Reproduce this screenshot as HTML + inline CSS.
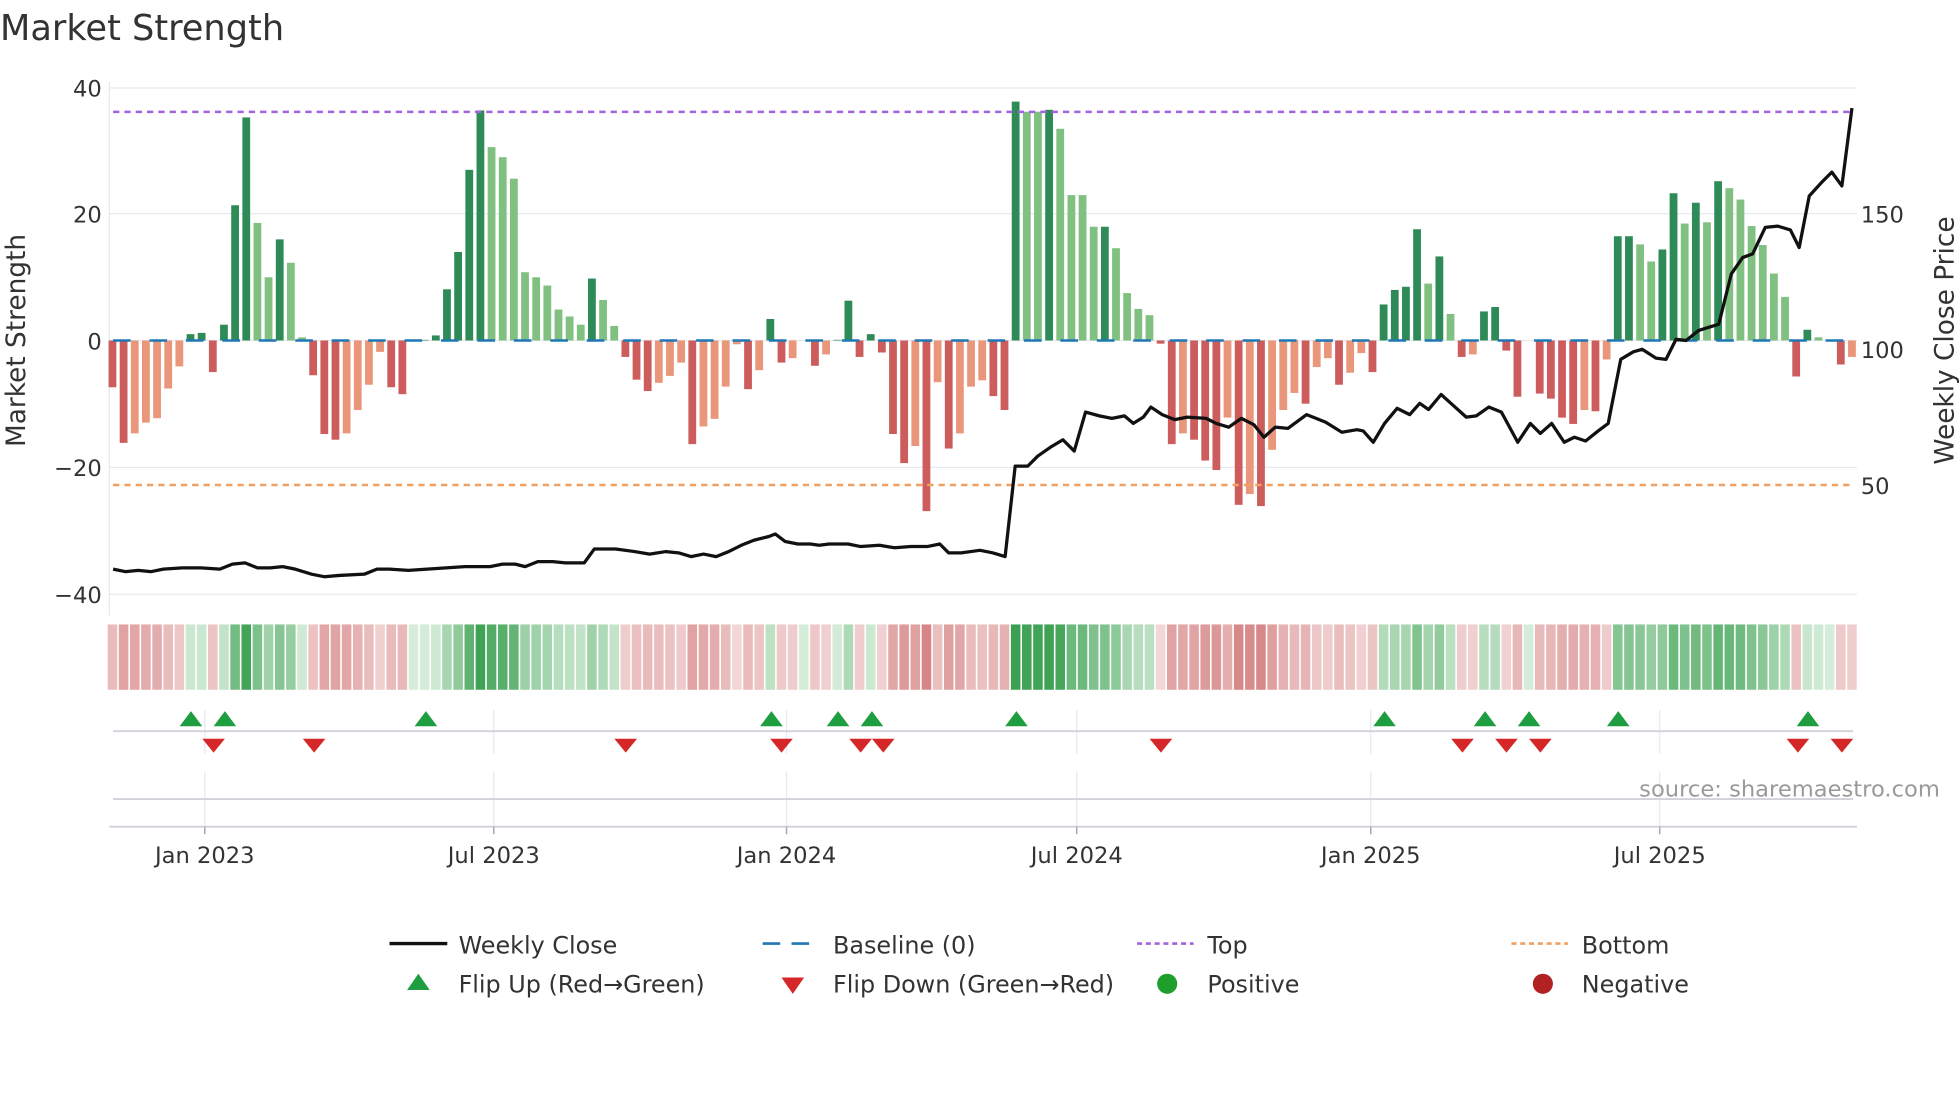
<!DOCTYPE html>
<html><head><meta charset="utf-8"><style>
html,body{margin:0;padding:0;background:#fff;width:1960px;height:1102px;overflow:hidden}
svg{display:block}
text{font-family:"DejaVu Sans","Liberation Sans",sans-serif;fill:#333}
</style></head><body>
<svg id="s" xmlns="http://www.w3.org/2000/svg" width="1960" height="1102" viewBox="0 0 1560 877.1" preserveAspectRatio="none">
<rect width="1560" height="878" fill="#fff"/>
<text x="0" y="32" font-size="28">Market Strength</text>
<g stroke="#e6e9ef" stroke-width="1">
<line x1="87" y1="70" x2="1478" y2="70"/><line x1="87" y1="170" x2="1478" y2="170"/>
<line x1="87" y1="271" x2="1478" y2="271"/><line x1="87" y1="372" x2="1478" y2="372"/>
<line x1="87" y1="473" x2="1478" y2="473"/><line x1="87" y1="65" x2="87" y2="490"/>
<line x1="163" y1="565" x2="163" y2="600"/><line x1="393" y1="565" x2="393" y2="600"/><line x1="626" y1="565" x2="626" y2="600"/><line x1="857" y1="565" x2="857" y2="600"/><line x1="1091" y1="565" x2="1091" y2="600"/><line x1="1321" y1="565" x2="1321" y2="600"/>
<line x1="163" y1="614" x2="163" y2="658"/><line x1="393" y1="614" x2="393" y2="658"/><line x1="626" y1="614" x2="626" y2="658"/><line x1="857" y1="614" x2="857" y2="658"/><line x1="1091" y1="614" x2="1091" y2="658"/><line x1="1321" y1="614" x2="1321" y2="658"/>
</g>
<g id="bars"></g>
<line x1="90" y1="89" x2="1475" y2="89" stroke="#a461e0" stroke-width="2" stroke-dasharray="5,4"/>
<line x1="90" y1="386" x2="1475" y2="386" stroke="#f0a060" stroke-width="2" stroke-dasharray="5,4"/>
<line x1="90" y1="271" x2="1475" y2="271" stroke="#1f77b4" stroke-width="2" stroke-dasharray="14,15"/>
<polyline id="price" fill="none" stroke="#111" stroke-width="2.6" stroke-linejoin="round"/>
<g id="heat"></g>
<g stroke="#cfd2d8" stroke-width="1.5">
<line x1="90" y1="582" x2="1475" y2="582"/><line x1="90" y1="636" x2="1475" y2="636"/><line x1="87" y1="658" x2="1478" y2="658"/>
</g>
<g stroke="#aaa" stroke-width="1.2"><line x1="163" y1="658" x2="163" y2="664"/><line x1="393" y1="658" x2="393" y2="664"/><line x1="626" y1="658" x2="626" y2="664"/><line x1="857" y1="658" x2="857" y2="664"/><line x1="1091" y1="658" x2="1091" y2="664"/><line x1="1321" y1="658" x2="1321" y2="664"/></g>
<g id="marks"></g>
<g font-size="18" text-anchor="middle">
<text x="163" y="687">Jan 2023</text><text x="393" y="687">Jul 2023</text><text x="626" y="687">Jan 2024</text><text x="857" y="687">Jul 2024</text><text x="1091" y="687">Jan 2025</text><text x="1321" y="687">Jul 2025</text>
</g>
<g font-size="18" text-anchor="end">
<text x="81" y="77">40</text><text x="81" y="177">20</text><text x="81" y="278">0</text><text x="81" y="379">−20</text><text x="81" y="480">−40</text>
</g>
<g font-size="18">
<text x="1481" y="177">150</text><text x="1481" y="285">100</text><text x="1481" y="393">50</text>
</g>
<text x="20" y="271" font-size="21" text-anchor="middle" transform="rotate(-90 20 271)">Market Strength</text>
<text x="1555" y="271" font-size="21" text-anchor="middle" transform="rotate(-90 1555 271)">Weekly Close Price</text>
<text x="1544" y="634" font-size="18" text-anchor="end" style="fill:#9a9a9a">source: sharemaestro.com</text>
<g font-size="19">
<line x1="310" y1="751" x2="356" y2="751" stroke="#111" stroke-width="2.6"/><text x="365" y="759">Weekly Close</text>
<line x1="607" y1="751" x2="652" y2="751" stroke="#1f77b4" stroke-width="2" stroke-dasharray="14,9"/><text x="663" y="759">Baseline (0)</text>
<line x1="905" y1="751" x2="950" y2="751" stroke="#a461e0" stroke-width="2" stroke-dasharray="4,3"/><text x="961" y="759">Top</text>
<line x1="1203" y1="751" x2="1248" y2="751" stroke="#f0a060" stroke-width="2" stroke-dasharray="4,3"/><text x="1259" y="759">Bottom</text>
<polygon points="324,788 342,788 333,775" fill="#1e9e40"/><text x="365" y="790">Flip Up (Red→Green)</text>
<polygon points="622,778 640,778 631,791" fill="#d62728"/><text x="663" y="790">Flip Down (Green→Red)</text>
<circle cx="929" cy="783" r="8" fill="#1e9e2a"/><text x="961" y="790">Positive</text>
<circle cx="1228" cy="783" r="8" fill="#b22222"/><text x="1259" y="790">Negative</text>
</g>
</svg>
<script>
var D="-7.4r -16.2r -14.7s -13s -12.3s -7.6s -4.1s 1d 1.2d -5r 2.5d 21.4d 35.3d 18.6l 10l 16d 12.3l 0.5l -5.5r -14.8r -15.7r -14.7s -11s -7s -1.8s -7.4r -8.5r 0d 0.1d 0.8d 8.1d 14d 27d 36.4d 30.6l 29l 25.6l 10.8l 10l 8.7l 4.9l 3.8l 2.5l 9.8d 6.4l 2.3l -2.6r -6.2r -8r -6.7s -5.6s -3.5s -16.4r -13.6s -12.4s -7.3s -0.6s -7.7r -4.7s 3.4d -3.5r -2.8s 0d -4r -2.2s 0.1d 6.3d -2.6r 1d -1.9r -14.8r -19.4r -16.7s -27r -6.6s -17.1r -14.7s -7.3s -6.3s -8.8r -11r 37.8d 36.2l 36.2l 36.5d 33.5l 23l 23l 18l 18d 14.6l 7.5l 5l 4l -0.5r -16.4r -14.7s -15.7r -19r -20.5r -12.2s -26r -24.3s -26.2r -17.3s -11s -8.3s -10r -4.2s -2.8s -7r -5.1s -2s -5r 5.7d 8d 8.5d 17.6d 9l 13.3d 4.2l -2.6r -2.2s 4.6d 5.3d -1.6r -8.9r 0d -8.4r -9.2r -12.2r -13.2r -11s -11.2r -3s 16.5d 16.5d 15.2l 12.5l 14.4d 23.3d 18.5l 21.8d 18.7l 25.2d 24.1l 22.3l 18.1l 15.1l 10.6l 6.9l -5.7r 1.7d 0.5l 0d -3.8r -2.6s".split(" ");
var C={d:"#2e8b57",l:"#80c080",r:"#cd5c5c",s:"#e9967a"};
var ns="http://www.w3.org/2000/svg",bars=document.getElementById("bars"),heat=document.getElementById("heat");
function el(g,t,a){var e=document.createElementNS(ns,t);for(var k in a)e.setAttribute(k,a[k]);g.appendChild(e);return e;}
function mix(a,b,t){var r=[];for(var i=0;i<3;i++)r.push(Math.round(a[i]+(b[i]-a[i])*t));return"rgb("+r.join(",")+")";}
var x0=89.5,p=8.875,z=271,u=5.03;
for(var i=0;i<D.length;i++){
 var v=parseFloat(D[i]),c=D[i].slice(-1),x=x0+p*i;
 var h=Math.abs(v)*u;
 if(h>0.3) el(bars,"rect",{x:x-3.1,y:v>0?z-h:z,width:6.2,height:h,fill:C[c]});
 var col;
 if(v>=0){var t=Math.min(1,v/38);col=mix([212,236,216],[58,160,80],Math.pow(t,0.8));}
 else{var t=Math.min(1,-v/27);col=mix([244,218,218],[214,134,134],Math.pow(t,0.8));}
 el(heat,"rect",{x:x-3.8,y:497,width:7.6,height:52,fill:col});
}
var P=[90,453,100,455,110,454,120,455,130,453,145,452,160,452,175,453,185,449,195,448,205,452,215,452,225,451,235,453,248,457,258,459,270,458,290,457,300,453,310,453,325,454,340,453,355,452,370,451,390,451,400,449,410,449,418,451,428,447,440,447,450,448,465,448,473,437,490,437,505,439,517,441,530,439,540,440,550,443,560,441,570,443,580,439,590,434,600,430,612,427,617,425,625,431,635,433,645,433,652,434,660,433,675,433,685,435,700,434,712,436,725,435,738,435,748,433,755,440,765,440,780,438,790,440,800,443,808,371,818,371,826,363,836,356,846,350,855,359,864,328,875,331,885,333,895,331,902,337,910,332,916,324,925,330,935,334,945,332,960,333,968,337,978,340,988,333,998,338,1006,348,1015,340,1025,341,1040,330,1055,336,1068,344,1080,342,1085,343,1093,352,1102,337,1112,325,1122,330,1130,321,1137,326,1147,314,1157,323,1167,332,1175,331,1185,324,1195,328,1208,352,1218,337,1226,345,1235,337,1245,352,1253,348,1262,351,1272,343,1280,337,1290,286,1300,280,1307,278,1318,285,1326,286,1334,270,1342,271,1352,263,1368,258,1378,218,1387,205,1395,202,1405,181,1415,180,1425,183,1432,197,1440,156,1450,145,1458,137,1466,148,1474,86];
var s="";for(var j=0;j<P.length;j+=2)s+=P[j]+","+P[j+1]+" ";
document.getElementById("price").setAttribute("points",s);
var mk=document.getElementById("marks");
[152,179,339,614,667,694,809,1102,1182,1217,1288,1439].forEach(function(x){el(mk,"polygon",{points:(x-9)+",578 "+(x+9)+",578 "+x+",566",fill:"#1e9e40"});});
[170,250,498,622,685,703,924,1164,1199,1226,1431,1466].forEach(function(x){el(mk,"polygon",{points:(x-9)+",588 "+(x+9)+",588 "+x+",599",fill:"#d62728"});});
</script>
</body></html>
